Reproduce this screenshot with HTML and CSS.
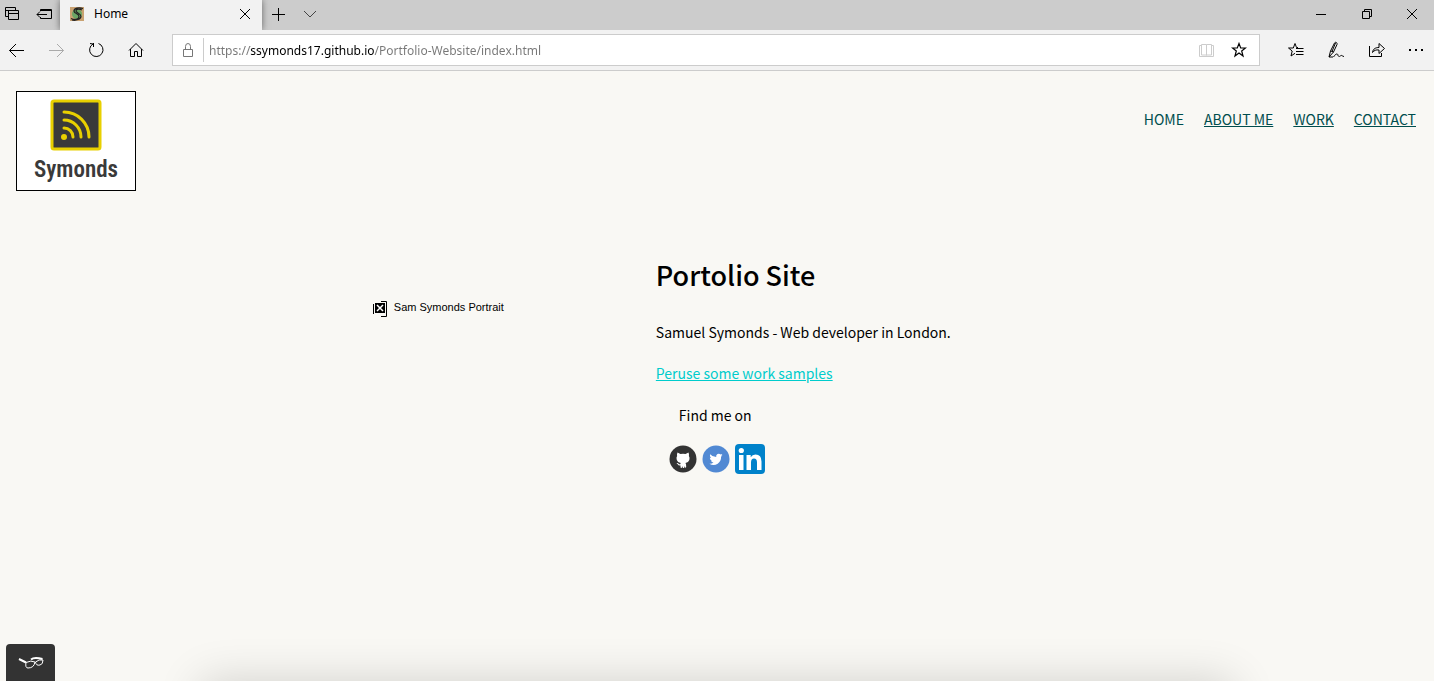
FILE: index.html
```html
<!DOCTYPE html>
<html lang="en">
<head>
<meta charset="utf-8">
<title>Home</title>
<link rel="stylesheet" href="styles.css">
</head>
<body>
<div class="tabbar">
  <button class="icon-btn tabs-btn" aria-label="Tabs you've set aside"><svg width="16" height="16" viewBox="0 0 16 16"><path d="M1.500 10.500V1.500H11.500V4M1.500 4.500H5M1.500 10.500H4.500M4.500 4.500H14.500V13.500H4.500ZM4.500 7.500H14.500"/></svg></button>
  <button class="icon-btn tabs-btn" aria-label="Set these tabs aside"><svg width="18" height="16" viewBox="0 0 18 16"><path d="M5.500 5V3.500H16.500V12.500H5.500V11M5 4.500H17M12 8.500H2M5 5.500L2 8.500L5 11.500"/></svg></button>
  <div class="tab">
    <svg class="favicon" width="14" height="14" viewBox="0 0 14 14"><rect class="fav-bg" width="14" height="14"/><circle class="fav-green" cx="7" cy="7" r="5"/><path class="fav-s" d="M13 1.500C9 0 4 1 4 4C4 7 9 6 9 9.500C9 13 4 13 1 11.500M12 3C9 1.500 6 2 6 4C6 6 11 6 11 9.500C11 12 6 14 2 13"/></svg>
    <span class="tab-title">Home</span>
    <button class="icon-btn" aria-label="Close tab"><svg width="12" height="12" viewBox="0 0 12 12"><path d="M1 1L11 11M11 1L1 11"/></svg></button>
  </div>
  <button class="icon-btn add-btn" aria-label="New tab"><svg width="14" height="14" viewBox="0 0 14 14"><path d="M7.500 1V14M1 7.500H14"/></svg></button>
  <button class="icon-btn preview-btn" aria-label="Show tab previews"><svg width="14" height="8" viewBox="0 0 14 8"><path d="M1 1L7 7L13 1"/></svg></button>
  <div class="window-controls">
    <button class="icon-btn" aria-label="Minimize"><svg width="12" height="12" viewBox="0 0 12 12"><path d="M1 6.500H11"/></svg></button>
    <button class="icon-btn" aria-label="Restore"><svg width="12" height="12" viewBox="0 0 12 12"><path d="M1.500 3.500H8.500V10.500H1.500ZM3.500 3.500V1.500H10.500V8.500H8.500"/></svg></button>
    <button class="icon-btn" aria-label="Close window"><svg width="12" height="12" viewBox="0 0 12 12"><path d="M1 1L11 11M11 1L1 11"/></svg></button>
  </div>
</div>

<div class="toolbar">
  <div class="history">
    <button class="icon-btn" aria-label="Back"><svg width="16" height="14" viewBox="0 0 16 14"><path d="M16 7.500H1.500M8 1L1.500 7.500L8 14"/></svg></button>
    <button class="icon-btn faded" aria-label="Forward"><svg width="16" height="14" viewBox="0 0 16 14"><path d="M1 7.500H15.500M9 1L15.500 7.500L9 14"/></svg></button>
    <button class="icon-btn" aria-label="Refresh"><svg width="16" height="16" viewBox="0 0 16 16"><path d="M10.500 1.500A6.700 6.700 0 1 1 5 2L2 1.500M5.500 1V5"/></svg></button>
    <button class="icon-btn" aria-label="Home page"><svg width="16" height="16" viewBox="0 0 16 16"><path d="M1 8.500L8 1.500L15 8.500M2.500 7V14.500H6.500V9.500H9.500V14.500H13.500V7"/></svg></button>
  </div>
  <div class="address">
    <svg class="lock" width="12" height="16" viewBox="0 0 12 16"><path d="M1.500 7.500H10.500V14.500H1.500ZM3.500 7.500V4.500A2.500 3 0 0 1 8.500 4.500V7.500"/></svg>
    <input class="url" type="text" aria-label="Address" value="https://ssymonds17.github.io/Portfolio-Website/index.html">
    <button class="icon-btn pale" aria-label="Reading view"><svg width="16" height="16" viewBox="0 0 16 16"><path d="M8.500 2.500V13.500M8.500 2.500H3.500V13H13.500V2.500H8.500M3.500 3.500H1.500V14.500H15.500V3.500H13.500"/></svg></button>
    <button class="icon-btn" aria-label="Add to favorites"><svg width="16" height="16" viewBox="0 0 16 16"><path class="bold" d="M8 1.500L9.700 6H14.500L10.700 9L12 14L8 11L4 14L5.300 9L1.500 6H6.300Z"/></svg></button>
  </div>
  <div class="tools">
    <button class="icon-btn" aria-label="Hub"><svg width="18" height="16" viewBox="0 0 18 16"><path d="M11 5.500H9.500L8 1.500L6.300 6H1.500L5.200 9L4 14L8 11.300M9 6.500H16.500M9 9.500H16.500M9 12.500H16.500"/></svg></button>
    <button class="icon-btn" aria-label="Add notes"><svg width="18" height="18" viewBox="0 0 18 18"><path d="M2 16L3.500 10L7.500 2C8.500 .5 10.500 1.500 10 3.500L6.500 11L2 16H6M4 10L6.500 11M8.500 2L5 10.500M6.500 16C9 12 11 12.500 11 14.500C12 16.500 13 15 14 14.500C15 14 15.500 15.500 17 15.500"/></svg></button>
    <button class="icon-btn" aria-label="Share"><svg width="18" height="16" viewBox="0 0 18 16"><path d="M1.500 4V14.500H13.500V11M4.500 10.500C5 6.500 8 5.500 11 5.500V1.500L16.500 6.500L11 11.500V8C8 7.500 6 8.500 4.500 10.500Z"/></svg></button>
    <button class="icon-btn" aria-label="Settings and more"><svg width="16" height="4" viewBox="0 0 16 4"><path class="solid" d="M1 1H3V3H1ZM7 1H9V3H7ZM13 1H15V3H13Z"/></svg></button>
  </div>
</div>

<div class="page">
  <header class="site-header">
    <a class="logo" href="#" aria-label="Symonds home">
      <svg width="52" height="52" viewBox="0 0 52 52"><rect class="logo-tile" x="2" y="2" width="48" height="48" rx="2"/><circle class="logo-dot" cx="14" cy="38" r="3"/><path class="logo-wave" d="M14 29A9 9 0 0 1 23 38M14 21A17 17 0 0 1 31 38M14 13A25 25 0 0 1 39 38"/></svg>
      <span class="logo-name">Symonds</span>
    </a>
    <nav class="nav">
      <a class="current" href="#home">HOME</a>
      <a href="#about">ABOUT ME</a>
      <a href="#work">WORK</a>
      <a href="#contact">CONTACT</a>
    </nav>
  </header>

  <main class="intro">
    <div class="portrait">
      <svg width="15" height="17" viewBox="0 0 15 17"><path d="M.5 3V13M8 .5H13.500V15.500H8"/><path class="solid" d="M2 2H12V12H2Z"/><path class="cross" d="M4 4L10 10M10 4L4 10"/></svg>
      <span>Sam Symonds Portrait</span>
    </div>
    <section class="about">
      <h1>Portolio Site</h1>
      <p>Samuel Symonds - Web developer in London.</p>
      <p><a class="samples" href="#work">Peruse some work samples</a></p>
      <p class="find">Find me on</p>
      <div class="social">
        <a href="#github" aria-label="GitHub"><svg width="28" height="28" viewBox="0 0 28 28"><circle class="github" cx="14" cy="14" r="13.500"/><path class="white" d="M8.500 7.500L11.500 9Q14 8.400 16.500 9L19.500 7.500Q20.300 9.300 19.900 11Q21 12.500 20.300 15Q19.600 17.500 16.500 18Q17.300 19 17.200 22L16 23L15.500 21L15 23H14L13.500 21L13 23L11.500 22.500V20.500Q9.500 20.800 8.500 19L7.500 18.200Q9 17.700 10 19.200H11.300L11.700 18Q8.500 17.500 7.800 15Q7 12.500 8.100 11Q7.700 9.300 8.500 7.500Z"/></svg></a>
        <a href="#twitter" aria-label="Twitter"><svg width="28" height="28" viewBox="0 0 28 28"><circle class="twitter" cx="14" cy="14" r="13.500"/><path class="white" d="M20.500 10Q19.700 10.500 19 10.500Q20 10 20.300 9L18.700 9.600Q17.300 8.200 15.500 9.100Q13.800 10 14.200 12Q10.500 12 8.200 9.200Q7.100 11.500 9 13.100L7.800 12.700Q7.900 15 10.100 15.600H8.900Q9.500 17.400 11.500 17.500Q9.700 18.900 7.400 18.700Q11.700 21.200 15.700 18.700Q19.200 16.300 19.100 11.800Z"/></svg></a>
        <a href="#linkedin" aria-label="LinkedIn"><svg width="30" height="30" viewBox="0 0 30 30"><rect class="linkedin" width="30" height="30" rx="4"/><circle class="white" cx="6.300" cy="6.500" r="2.600"/><path class="white" d="M4 11H8.500V26H4ZM11.500 11H15.700V13.200Q17.300 10.500 20.500 10.500Q26.500 10.500 26.500 17.500V26H22V18.500Q22 14.500 19 14.500Q16 14.500 16 18.500V26H11.500Z"/></svg></a>
      </div>
    </section>
  </main>
  <div class="bottom-shade"><div class="shade-source"></div></div>
  <button class="reader" aria-label="Reading glasses"><svg width="26" height="14" viewBox="0 0 26 14"><path class="glasses" d="M8 6.500Q7 12 10 12Q16 12 17 6Q13 4 8 6.500M17.500 6Q21 3 25 4Q25 8.500 22 9Q18 10 17.500 6"/><path class="stem" d="M1 3L8 6.500M13 3.500Q16 1 24.500 3"/></svg></button>
</div>
</body>
</html>
```
FILE: styles.css
```css
* { box-sizing: border-box; }

body {
  margin: 0;
  min-height: 100vh;
  display: flex;
  flex-direction: column;
  background: #f9f8f4;
  color: #000;
  font: 14px/22px "Noto Sans CJK SC", "Open Sans", sans-serif;
}

button { padding: 0; border: 0; background: none; color: #000; }
svg { display: block; }

.icon-btn { display: grid; place-items: center; flex: none; }
.icon-btn svg, .lock, .portrait svg { fill: none; stroke: currentColor; stroke-width: 1; }
.icon-btn svg .bold { stroke-width: 1.2; }
svg .solid { fill: currentColor; stroke: none; }

/* Tab strip */
.tabbar { display: flex; height: 30px; background: #ccc; align-items: stretch; padding: 0 0 2px 3px; overflow: hidden; }
.tabs-btn { width: 18px; }
.tabs-btn + .tabs-btn { margin-left: 14px; }
.tab { display: flex; align-items: center; width: 202px; height: 30px; margin-left: 7px; padding: 0 11px 2px 10px; background: #f2f2f2; box-shadow: 0 0 7px #666; }
.tab-title { flex: 1; margin-left: 10px; font: 12px/18px "Noto Sans", sans-serif; }
.fav-bg { fill: #c9a272; }
.fav-green { fill: #6aa565; }
.fav-s { fill: none; stroke: #222; stroke-width: 1.2; }
.add-btn { width: 32px; }
.preview-btn { width: 32px; color: #444; }
.window-controls { display: flex; margin-left: auto; }
.window-controls .icon-btn { width: 46px; }
.window-controls .icon-btn:last-child { width: 44px; }

/* Toolbar */
.toolbar { display: flex; align-items: center; height: 41px; background: #f2f2f2; border-bottom: 1px solid #ccc; }
.history { display: flex; width: 172px; padding-left: 8px; gap: 24px; }
.history .icon-btn { width: 16px; height: 24px; }
.toolbar .faded { color: #aaa; }
.toolbar .pale { color: #ccc; }
.address { flex: 1; display: flex; align-items: center; height: 32px; padding: 0 12px 0 9px; background: #fff; border: 1px solid #ccc; }
.address .icon-btn { width: 16px; }
.address .icon-btn + .icon-btn { margin-left: 17px; }
.lock { margin-right: 9px; color: #777; }
.url {
  flex: 1;
  min-width: 0;
  height: 24px;
  padding: 0 0 0 5px;
  border: 0;
  border-left: 1px solid #ccc;
  outline: 0;
  font: 12px/20px "Noto Sans", sans-serif;
  color: transparent;
  background: linear-gradient(90deg, #777 46px, #000 46px, #000 170px, #777 170px) text;
}
.tools { display: flex; justify-content: space-between; width: 174px; padding: 0 10px 0 27px; }
.tools .icon-btn { height: 24px; }

/* Page */
.page { position: relative; flex: 1; overflow: hidden; }
.site-header { display: flex; justify-content: space-between; align-items: flex-start; padding: 20px 18px 0 16px; }
.logo { display: flex; flex-direction: column; align-items: center; width: 120px; height: 100px; padding-top: 7px; border: 1px solid #000; background: #fff; color: #3a3a3a; text-decoration: none; }
.logo-name { font: 600 23px/38px "Roboto Condensed", "Open Sans Condensed", Roboto, sans-serif; }
.logo-tile { fill: #3a3a3a; stroke: #e8d000; stroke-width: 3; }
.logo-dot { fill: #e8d000; }
.logo-wave { fill: none; stroke: #e8d000; stroke-width: 3; stroke-linecap: round; }
.nav { display: flex; gap: 20px; padding-top: 17px; }
.nav a { color: #004d4d; }
.nav .current { text-decoration: none; }

.intro { display: grid; grid-template-columns: 283px 1fr; padding: 66px 16px 0 26%; }
.portrait { display: flex; gap: 6px; margin-top: 44px; font: 11px/13px "Liberation Sans", sans-serif; }
.portrait svg .cross { stroke: #fff; stroke-width: 1.5; }
.about h1 { margin: 0 0 28px; font-size: 27px; line-height: 36px; font-weight: 500; }
.about p { margin: 0 0 19px; }
.about .samples { color: #0cc; }
.about .find { margin: 20px 0 18px 23px; }
.social { display: flex; align-items: center; gap: 5px; margin-left: 13px; }
.github { fill: #333; }
.twitter { fill: #5189d3; }
.linkedin { fill: #0082ca; }
.white { fill: #fff; }

/* Shadow rising from below the fold */
.bottom-shade { position: absolute; left: 0; right: 0; bottom: 0; height: 60px; overflow: hidden; }
.shade-source { height: 60px; margin: 60px 14% 0; box-shadow: 0 0 45px rgba(0, 0, 0, 0.16); }

.reader { position: absolute; left: 6px; bottom: 0; display: grid; place-items: center; width: 49px; height: 37px; border-radius: 4px 4px 0 0; background: #333; }
.glasses { fill: none; stroke: #fff; stroke-width: 1; }
.stem { fill: none; stroke: #fff; stroke-width: 2; }
```
